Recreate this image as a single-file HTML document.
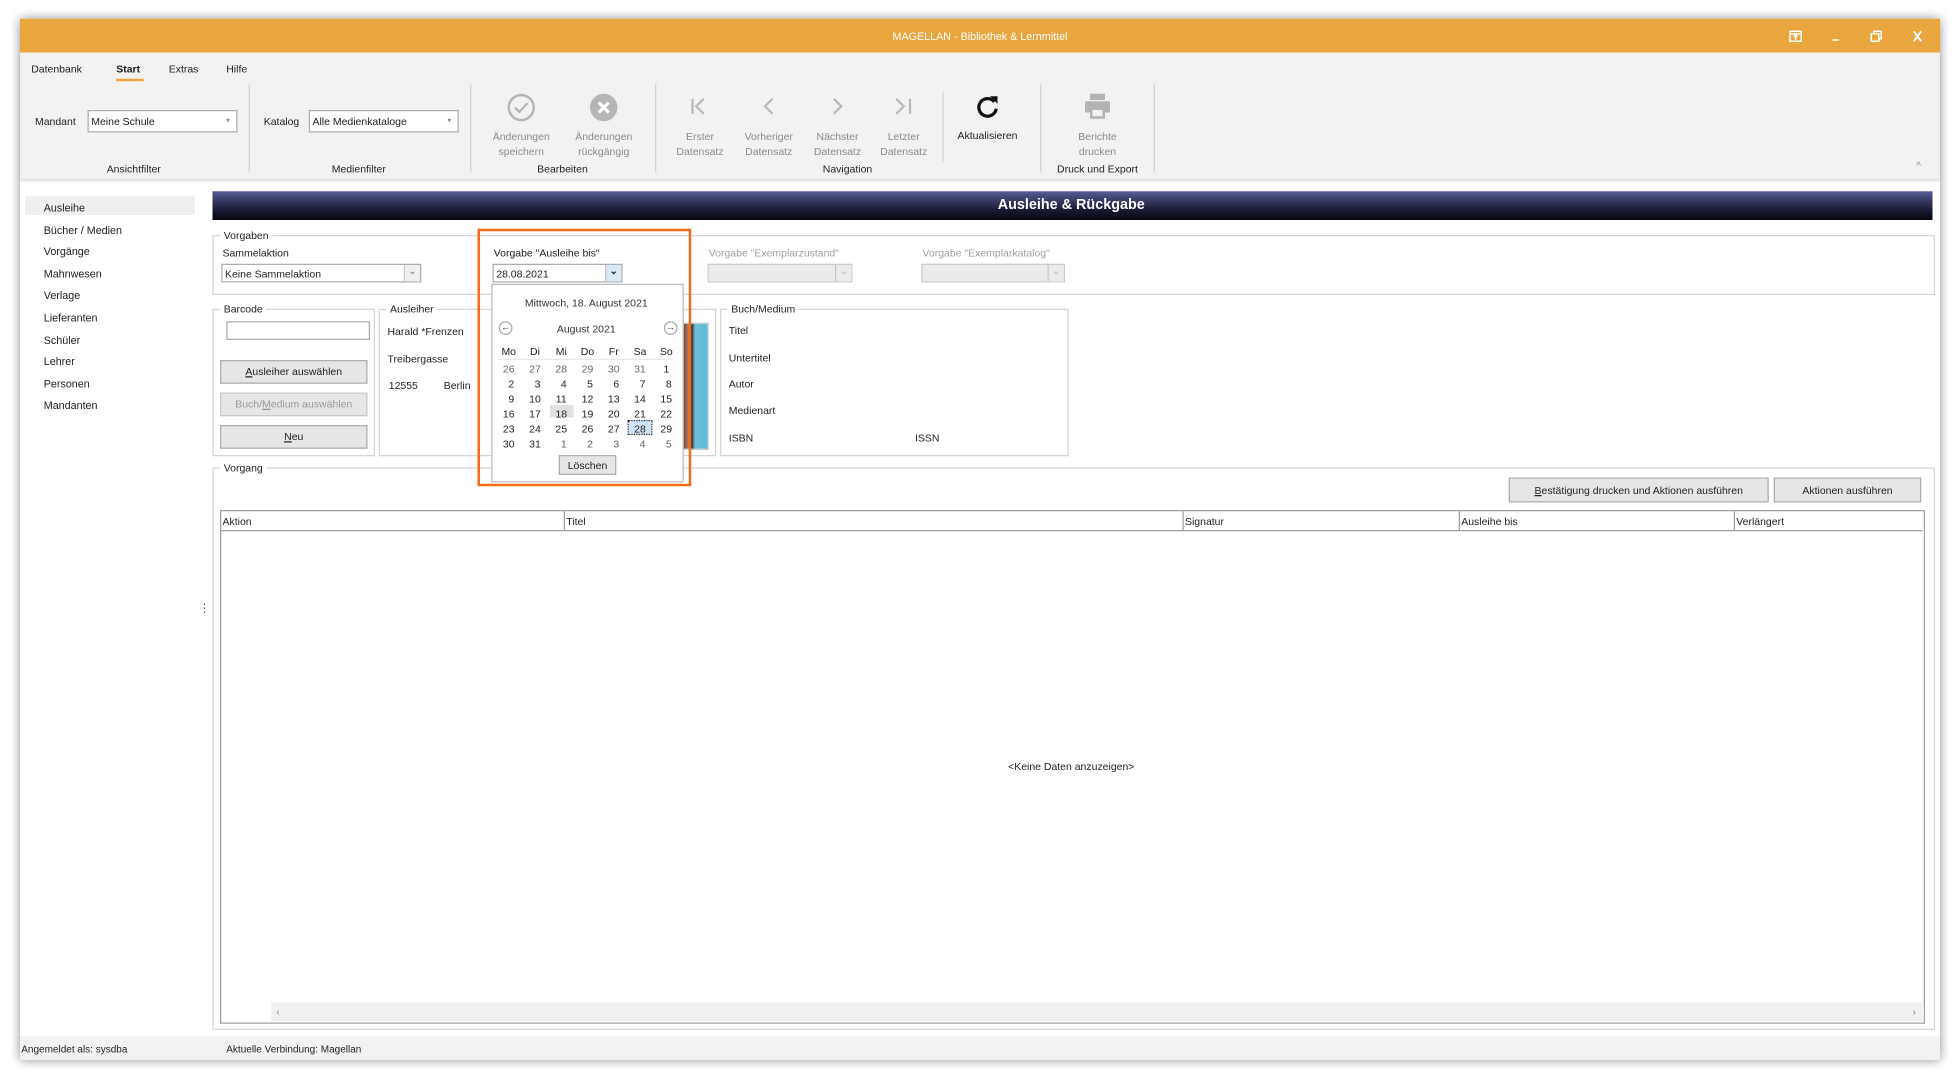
<!DOCTYPE html>
<html><head><meta charset="utf-8">
<style>
html,body{margin:0;padding:0;width:1960px;height:1080px;overflow:hidden;background:#fff;}
#s{position:absolute;left:0;top:0;width:1568px;height:864px;transform:scale(1.25);transform-origin:0 0;font-family:"Liberation Sans",sans-serif;font-size:8.4px;color:#222;}
.a{position:absolute;white-space:nowrap;}
.c{transform:translateX(-50%);}
.g{color:#8a8a8a;}
.sep{position:absolute;width:1px;background:#d4d4d4;top:67px;height:71px;}
.box{position:absolute;border:1px solid #d6d6d6;}
.lg{position:absolute;background:#fff;padding:0 3px;top:-6px;}
.btn{position:absolute;border:1px solid #adadad;background:#e6e6e6;text-align:center;line-height:16px;}
.cb{position:absolute;border:1px solid #abadb3;background:#fff;height:15px;line-height:14px;padding-left:2px;box-sizing:border-box;}
.dd{position:absolute;right:0;top:0;width:12px;height:13px;border-left:1px solid #c8c8c8;background:#f0f0f0;}
.cal span{position:absolute;width:16px;text-align:center;transform:translateX(-50%);}
</style></head><body>
<div id="s">
<div class="a" style="left:16px;top:15px;width:1536px;height:833px;background:#fff;box-shadow:0 0 8px rgba(0,0,0,.45);"></div>
<div class="a" style="left:16px;top:15px;width:1536px;height:27px;background:#e9a53e;"></div>
<div class="a c" style="left:784px;top:24px;color:#fff;font-size:8.6px;">MAGELLAN - Bibliothek &amp; Lernmittel</div>
<svg class="a" style="left:1430px;top:23px" width="112" height="12" viewBox="0 0 112 12" fill="none" stroke="#fff" stroke-width="1.2">
<rect x="2" y="2" width="9" height="8"/><path d="M2 4h9M6.5 9V5M4.8 6.5l1.7-1.7 1.7 1.7"/>
<path d="M36 9h5"/>
<rect x="67" y="4" width="6" height="6"/><path d="M69 4V2h6v6h-2"/>
<path d="M101 2l6 8M107 2l-6 8" stroke-width="1.5"/></svg>
<div class="a" style="left:16px;top:42px;width:1536px;height:101px;background:#f3f2f1;box-shadow:0 2px 2px rgba(0,0,0,.12);"></div>
<div class="a" style="left:25px;top:50px;">Datenbank</div>
<div class="a" style="left:93px;top:50px;font-weight:bold;">Start</div>
<div class="a" style="left:93px;top:63px;width:22px;height:2px;background:#e9a53e;"></div>
<div class="a" style="left:135px;top:50px;">Extras</div>
<div class="a" style="left:181px;top:50px;">Hilfe</div>
<div class="sep" style="left:199px"></div><div class="sep" style="left:376px"></div><div class="sep" style="left:524px"></div>
<div class="sep" style="left:754px;top:74px;height:56px"></div><div class="sep" style="left:832px"></div><div class="sep" style="left:923px"></div>
<div class="a" style="left:28px;top:92px;">Mandant</div>
<div class="cb" style="left:70px;top:88px;width:120px;height:18px;line-height:16px;">Meine Schule<span class="a g" style="right:4px;top:0;font-size:5px">▼</span></div>
<div class="a" style="left:211px;top:92px;">Katalog</div>
<div class="cb" style="left:247px;top:88px;width:120px;height:18px;line-height:16px;">Alle Medienkataloge<span class="a g" style="right:4px;top:0;font-size:5px">▼</span></div>
<div class="a c" style="left:107px;top:130px;">Ansichtfilter</div>
<div class="a c" style="left:287px;top:130px;">Medienfilter</div>
<div class="a c" style="left:450px;top:130px;">Bearbeiten</div>
<div class="a c" style="left:678px;top:130px;">Navigation</div>
<div class="a c" style="left:878px;top:130px;">Druck und Export</div>
<svg class="a" style="left:405px;top:74px" width="24" height="24"><circle cx="12" cy="12" r="10" fill="none" stroke="#b5b5b5" stroke-width="2"/><path d="M7 12l3.5 3.5L17 8.5" fill="none" stroke="#b5b5b5" stroke-width="1.8"/></svg>
<svg class="a" style="left:471px;top:74px" width="24" height="24"><circle cx="12" cy="12" r="11" fill="#b5b5b5"/><path d="M8 8l8 8M16 8l-8 8" stroke="#fff" stroke-width="2.6"/></svg>
<svg class="a" style="left:548px;top:76px" width="220" height="20" fill="none" stroke="#b9b9b9" stroke-width="1.8">
<path d="M6 3v12M15 3l-6 6 6 6"/><path d="M70 3l-6 6 6 6"/><path d="M119 3l6 6-6 6"/><path d="M169 3l6 6-6 6M180 3v12"/></svg>
<svg class="a" style="left:779px;top:74px" width="22" height="22"><path d="M16.5 7.5A7 7 0 1 0 18 13" fill="none" stroke="#111" stroke-width="2.6"/><path d="M13 3h6v6z" fill="#111"/></svg>
<svg class="a" style="left:866px;top:73px" width="24" height="24" fill="#b3b3b3"><rect x="6" y="2" width="12" height="5"/><rect x="2" y="8" width="20" height="9" rx="1"/><rect x="6" y="13" width="12" height="9" fill="#b3b3b3"/><rect x="8" y="15" width="8" height="5" fill="#f3f2f1"/></svg>
<div class="a c g" style="left:417px;top:103px;text-align:center;line-height:12px;">Änderungen<br>speichern</div>
<div class="a c g" style="left:483px;top:103px;text-align:center;line-height:12px;">Änderungen<br>rückgängig</div>
<div class="a c g" style="left:560px;top:103px;text-align:center;line-height:12px;">Erster<br>Datensatz</div>
<div class="a c g" style="left:615px;top:103px;text-align:center;line-height:12px;">Vorheriger<br>Datensatz</div>
<div class="a c g" style="left:670px;top:103px;text-align:center;line-height:12px;">Nächster<br>Datensatz</div>
<div class="a c g" style="left:723px;top:103px;text-align:center;line-height:12px;">Letzter<br>Datensatz</div>
<div class="a c" style="left:790px;top:103px;">Aktualisieren</div>
<div class="a c g" style="left:878px;top:103px;text-align:center;line-height:12px;">Berichte<br>drucken</div>
<div class="a g" style="left:1533px;top:128px;font-size:8px;">^</div>
<div class="a" style="left:20px;top:157px;width:136px;height:15px;background:#efefef;"></div>
<div class="a" style="left:35px;top:158px;line-height:17.6px;font-size:8.6px;">Ausleihe<br>Bücher / Medien<br>Vorgänge<br>Mahnwesen<br>Verlage<br>Lieferanten<br>Schüler<br>Lehrer<br>Personen<br>Mandanten</div>
<div class="a" style="left:16px;top:829px;width:140px;height:1px;background:#e6e6e6;"></div>
<div class="a" style="left:159px;top:481px;font-size:9px;color:#555;">⋮</div>
<div class="a" style="left:170px;top:153px;width:1376px;height:23px;background:linear-gradient(#565c96,#1d1f3a 60%,#05050e);"></div>
<div class="a c" style="left:857px;top:158px;color:#fff;font-weight:bold;font-size:11.5px;">Ausleihe &amp; Rückgabe</div>
<div class="box" style="left:170px;top:188px;width:1376px;height:46px;"><div class="lg" style="left:5px">Vorgaben</div></div>
<div class="a" style="left:178px;top:197px;">Sammelaktion</div>
<div class="cb" style="left:177px;top:211px;width:160px;">Keine Sammelaktion<div class="dd" style="font-size:8px;text-align:center;color:#777;line-height:10px">⌄</div></div>
<div class="a" style="left:395px;top:197px;">Vorgabe "Ausleihe bis"</div>
<div class="cb" style="left:394px;top:211px;width:104px;">28.08.2021<div class="dd" style="background:#dbe8f5;text-align:center;font-size:8px;font-weight:bold;line-height:10px">⌄</div></div>
<div class="a g" style="left:567px;top:197px;color:#a0a0a0">Vorgabe "Exemplarzustand"</div>
<div class="cb" style="left:566px;top:211px;width:116px;background:#ebebeb;border-color:#ccc;"><div class="dd" style="background:#ebebeb;text-align:center;font-size:8px;color:#bbb;line-height:10px">⌄</div></div>
<div class="a g" style="left:738px;top:197px;color:#a0a0a0">Vorgabe "Exemplarkatalog"</div>
<div class="cb" style="left:737px;top:211px;width:115px;background:#ebebeb;border-color:#ccc;"><div class="dd" style="background:#ebebeb;text-align:center;font-size:8px;color:#bbb;line-height:10px">⌄</div></div>
<div class="box" style="left:170px;top:247px;width:128px;height:116px;"><div class="lg" style="left:5px">Barcode</div></div>
<div class="a" style="left:181px;top:257px;width:115px;height:15px;border:1px solid #abadb3;box-sizing:border-box;"></div>
<div class="btn" style="left:176px;top:288px;width:116px;height:17px;"><u>A</u>usleiher auswählen</div>
<div class="btn g" style="left:176px;top:314px;width:116px;height:17px;border-color:#c8c8c8;color:#999;">Buch/<u>M</u>edium auswählen</div>
<div class="btn" style="left:176px;top:340px;width:116px;height:17px;"><u>N</u>eu</div>
<div class="box" style="left:303px;top:247px;width:268px;height:116px;"><div class="lg" style="left:5px">Ausleiher</div></div>
<div class="a" style="left:310px;top:260px;">Harald *Frenzen</div>
<div class="a" style="left:310px;top:282px;">Treibergasse</div>
<div class="a" style="left:311px;top:303px;">12555</div><div class="a" style="left:355px;top:303px;">Berlin</div>
<div class="a" style="left:530px;top:258px;width:35px;height:100px;border:1px solid #ccc;background:linear-gradient(90deg,#3a2418,#6b4430 45%,#b98a6a 58%,#3b2a20 64%,#6cc3d9 72%,#5bbad6);"></div>
<div class="box" style="left:576px;top:247px;width:277px;height:116px;"><div class="lg" style="left:5px">Buch/Medium</div></div>
<div class="a" style="left:583px;top:259px;">Titel</div>
<div class="a" style="left:583px;top:281px;">Untertitel</div>
<div class="a" style="left:583px;top:302px;">Autor</div>
<div class="a" style="left:583px;top:323px;">Medienart</div>
<div class="a" style="left:583px;top:345px;">ISBN</div><div class="a" style="left:732px;top:345px;">ISSN</div>
<div class="box" style="left:170px;top:374px;width:1376px;height:448px;"><div class="lg" style="left:5px">Vorgang</div></div>
<div class="btn" style="left:1207px;top:382px;width:206px;height:18px;line-height:18px;"><u>B</u>estätigung drucken und Aktionen ausführen</div>
<div class="btn" style="left:1419px;top:382px;width:116px;height:18px;line-height:18px;">Aktionen ausführen</div>
<div class="a" style="left:176px;top:408px;width:1362px;height:409px;border:1px solid #a0a0a0;background:#fff;"></div>
<div class="a" style="left:177px;top:409px;width:1361px;height:15px;border-bottom:1px solid #a0a0a0;"></div>
<div class="a" style="left:451px;top:409px;width:1px;height:15px;background:#a0a0a0"></div>
<div class="a" style="left:946px;top:409px;width:1px;height:15px;background:#a0a0a0"></div>
<div class="a" style="left:1167px;top:409px;width:1px;height:15px;background:#a0a0a0"></div>
<div class="a" style="left:1387px;top:409px;width:1px;height:15px;background:#a0a0a0"></div>
<div class="a" style="left:178px;top:412px;">Aktion</div><div class="a" style="left:453px;top:412px;">Titel</div><div class="a" style="left:948px;top:412px;">Signatur</div><div class="a" style="left:1169px;top:412px;">Ausleihe bis</div><div class="a" style="left:1389px;top:412px;">Verlängert</div>
<div class="a c" style="left:857px;top:608px;">&lt;Keine Daten anzuzeigen&gt;</div>
<div class="a" style="left:217px;top:802px;width:1321px;height:15px;background:#f0f0f0;"></div>
<div class="a g" style="left:221px;top:804px;">‹</div><div class="a g" style="left:1530px;top:804px;">›</div>
<div class="a" style="left:16px;top:829px;width:1536px;height:19px;background:#f3f2f1;"></div>
<div class="a" style="left:17px;top:835px;font-size:8px;">Angemeldet als: sysdba</div>
<div class="a" style="left:181px;top:835px;font-size:8px;">Aktuelle Verbindung: Magellan</div>
<div class="a" style="left:382px;top:183px;width:167px;height:202px;border:2px solid #f26b1d;"></div>
<div class="a cal" style="left:393px;top:227px;width:152px;height:157px;background:#fff;border:1px solid #bcbcbc;"></div>
<div class="a c" style="left:469px;top:237px;color:#333;">Mittwoch, 18. August 2021</div>
<div class="a" style="left:399px;top:257px;width:9px;height:9px;border:1px solid #aaa;border-radius:50%;font-size:7px;line-height:9px;text-align:center;">←</div>
<div class="a" style="left:531px;top:257px;width:9px;height:9px;border:1px solid #aaa;border-radius:50%;font-size:7px;line-height:9px;text-align:center;">→</div>
<div class="a c" style="left:469px;top:258px;color:#333;">August 2021</div>
<div class="a" style="left:440px;top:324px;width:19px;height:10px;background:#e1e1e1;"></div>
<div class="a" style="left:502px;top:336px;width:18px;height:10px;background:#cfe3f5;border:1px dotted #333;"></div>
<div class="a" style="left:398px;top:287px;width:140px;height:1px;background:#e8e8e8;"></div>
<div class="a cal" style="left:0;top:0;">
<div style="position:absolute;top:276px"><span style="left:407px">Mo</span><span style="left:428px">Di</span><span style="left:449px">Mi</span><span style="left:470px">Do</span><span style="left:491px">Fr</span><span style="left:512px">Sa</span><span style="left:533px">So</span></div>
<div style="position:absolute;top:290px;color:#666"><span style="left:407px">26</span><span style="left:428px">27</span><span style="left:449px">28</span><span style="left:470px">29</span><span style="left:491px">30</span><span style="left:512px">31</span><span style="left:533px;color:#222">1</span></div>
<div style="position:absolute;top:302px"><span style="left:409px">2</span><span style="left:430px">3</span><span style="left:451px">4</span><span style="left:472px">5</span><span style="left:493px">6</span><span style="left:514px">7</span><span style="left:535px">8</span></div>
<div style="position:absolute;top:314px"><span style="left:409px">9</span><span style="left:428px">10</span><span style="left:449px">11</span><span style="left:470px">12</span><span style="left:491px">13</span><span style="left:512px">14</span><span style="left:533px">15</span></div>
<div style="position:absolute;top:326px"><span style="left:407px">16</span><span style="left:428px">17</span><span style="left:449px">18</span><span style="left:470px">19</span><span style="left:491px">20</span><span style="left:512px">21</span><span style="left:533px">22</span></div>
<div style="position:absolute;top:338px"><span style="left:407px">23</span><span style="left:428px">24</span><span style="left:449px">25</span><span style="left:470px">26</span><span style="left:491px">27</span><span style="left:512px">28</span><span style="left:533px">29</span></div>
<div style="position:absolute;top:350px"><span style="left:407px">30</span><span style="left:428px">31</span><span style="left:451px;color:#666">1</span><span style="left:472px;color:#666">2</span><span style="left:493px;color:#666">3</span><span style="left:514px;color:#666">4</span><span style="left:535px;color:#666">5</span></div>
</div>
<div class="btn" style="left:447px;top:364px;width:44px;height:14px;line-height:14px;">Löschen</div>
</div>
</body></html>
